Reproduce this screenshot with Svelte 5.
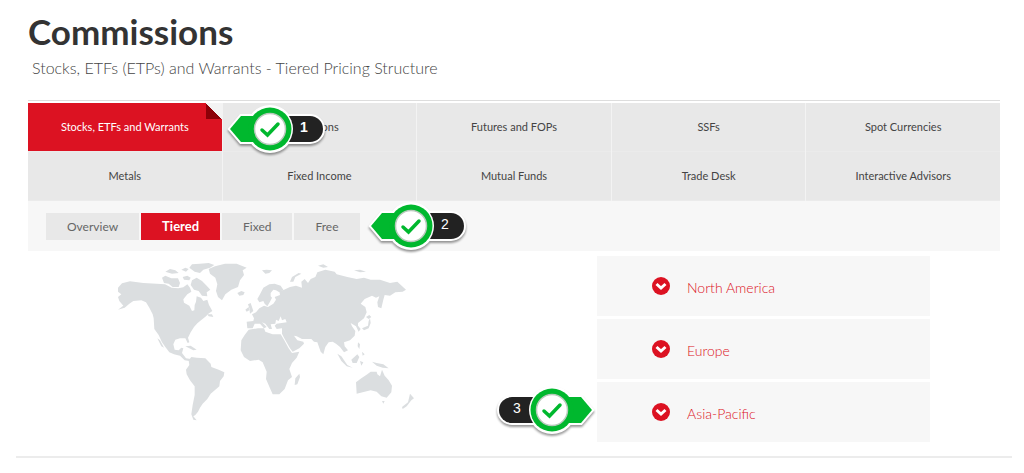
<script lang="ts">
	const products = [
		'Stocks, ETFs and Warrants',
		'Options',
		'Futures and FOPs',
		'SSFs',
		'Spot Currencies',
		'Metals',
		'Fixed Income',
		'Mutual Funds',
		'Trade Desk',
		'Interactive Advisors'
	];
	const plans = ['Overview', 'Tiered', 'Fixed', 'Free'];
	const regions = ['North America', 'Europe', 'Asia-Pacific'];

	let product = $state('Stocks, ETFs and Warrants');
	let plan = $state('Tiered');
</script>

{#snippet marker(step: number, side: 'left' | 'right')}
	<svg class="marker" viewBox="0 0 100 52" role="img" aria-label="Step {step}">
		<g transform={side === 'right' ? 'translate(100 0) scale(-1 1)' : undefined}>
			<g class="outline">
				<path d="M3 26L14 13H43V39H14Z" />
				<rect x="30" y="13" width="66" height="26" rx="13" />
				<circle cx="43" cy="26" r="22" />
			</g>
			<rect x="30" y="13" width="66" height="26" rx="13" fill="#222" />
			<circle cx="43" cy="26" r="23" fill="#fff" />
			<path d="M3 26L14 13H43V39H14Z" fill="#00b82e" />
			<circle cx="43" cy="26" r="21.5" fill="#00b82e" />
			<circle cx="43" cy="26" r="15.5" fill="#fff" stroke="#b9c9bc" stroke-width="1.5" />
		</g>
		<path class="tick" d={side === 'right' ? 'M49 27L54.5 32L65 21' : 'M35 27L40.5 32L51 21'} />
		<text class:bold={step === 1} x={side === 'right' ? 22 : 77} y="29">{step}</text>
	</svg>
{/snippet}

<main>
	<header>
		<h1>Commissions</h1>
		<p>Stocks, ETFs (ETPs) and Warrants - Tiered Pricing Structure</p>
	</header>

	<nav class="products">
		{#each products as name, i}
			<div class="cell">
				<button class:active={product === name} onclick={() => (product = name)}>{name}</button>
				{#if i === 1}
					<div class="over-cell">{@render marker(1, 'left')}</div>
				{/if}
			</div>
		{/each}
	</nav>

	<nav class="plans">
		{#each plans as name}
			<button class:active={plan === name} onclick={() => (plan = name)}>{name}</button>
		{/each}
		{@render marker(2, 'left')}
	</nav>

	<div class="content">
		<div class="map">
			<svg viewBox="45 15 906 489" role="img" aria-label="World map">
				<!-- Americas -->
				<path d="M54 98L66 85L90 79L130 84L170 86L195 88L215 98L235 100L250 97L262 88L270 98L274 110L262 118L250 133L252 143L268 152L276 168L283 166L284 150L288 140L290 124L303 128L310 138L322 134L327 150L337 168L325 176L318 184L303 196L292 205L282 216L272 232L264 248L268 262L263 264L256 250L240 250L226 254L220 268L224 284L236 286L244 278L250 280L246 294L258 310L272 312L268 318L254 316L240 302L222 298L208 292L196 276L186 262L176 240L163 222L161 190L158 178L148 158L138 142L124 136L100 138L88 146L74 158L54 164L70 152L58 138L54 126L64 118L54 110Z" />
				<path d="M172 250L180 256L192 278L184 274ZM256 274L272 272L290 284L280 286ZM322 178L336 178L340 186L326 184Z" />
				<path d="M186 68L196 62L214 70L234 70L240 84L236 96L218 96L206 86L192 84ZM196 50L210 42L226 46L236 54L216 56ZM244 44L256 38L266 42L258 50ZM268 38L276 28L300 26L326 24L343 30L330 38L310 44L300 54L284 50ZM248 66L262 62L272 68L268 76L252 74ZM276 76L290 68L306 78L320 92L331 104L320 112L322 124L306 122L296 108L282 104L272 90Z" />
				<path d="M326 42L345 34L375 26L410 26L440 38L428 46L432 60L420 76L414 96L394 104L376 118L366 136L354 126L348 108L352 88L346 68L330 56ZM412 114L424 108L434 112L430 120L418 122Z" />
				<path d="M266 316L274 306L290 308L316 310L332 326L334 336L356 344L373 352L371 364L360 378L358 394L346 404L332 416L322 432L308 446L300 458L294 470L286 480L280 484L290 496L280 494L274 478L278 450L284 420L284 394L270 376L260 358L258 344L268 330Z" />
				<g transform="translate(420 0)">
					<!-- Europe and Asia -->
					<path d="M52 132L60 118L70 98L88 88L104 86L122 92L130 104L118 112L108 106L100 104L92 114L92 124L96 128L90 140L82 154L74 146L70 138L58 142Z" />
					<path d="M118 108L132 104L150 96L168 92L186 98L184 80L194 72L204 84L212 72L226 66L232 52L256 44L284 50L290 58L322 66L350 72L372 68L392 74L420 74L450 84L472 80L498 104L488 110L466 112L450 122L434 120L430 134L424 160L414 156L412 142L418 124L408 128L396 122L374 132L362 146L376 156L380 172L372 190L354 204L354 212L362 222L356 230L348 214L332 204L336 214L346 228L344 242L330 256L312 262L314 274L324 286L312 292L300 276L288 266L278 260L266 262L256 276L250 298L242 290L232 262L222 260L214 252L186 252L170 244L162 242L172 256L190 260L192 266L178 280L158 290L150 280L132 248L126 236L126 220L110 222L104 212L110 206L140 202L136 192L126 196L122 184L116 198L108 194L106 206L92 208L96 222L88 222L76 206L66 202L80 216L72 220L60 206L44 206L38 220L22 220L20 200L40 198L42 190L36 178L48 172L58 160L72 152L84 156L100 146L108 134L104 126L120 120Z" />
					<path d="M30 176L40 168L32 144L24 148L28 160ZM16 164L26 156L28 166L20 170ZM66 46L80 44L96 46L88 54L76 56ZM150 80L156 66L176 54L184 56L166 66L160 80ZM234 32L250 28L264 36L250 38ZM342 46L360 44L378 50L360 52ZM366 220L384 212L386 198L390 190L392 204L386 220L372 226ZM378 186L388 180L394 186L386 192Z" />
					<path d="M292 296L304 304L322 330L338 338L320 334L304 318ZM334 314L352 298L358 306L350 324L338 324ZM360 318L370 322L364 332ZM354 262L360 268L358 282L353 274ZM366 290L374 298L368 302ZM396 320L410 324L430 328L446 340L428 338L410 332Z" />
					<!-- Africa -->
					<path d="M26 224L54 220L72 220L76 230L98 238L122 238L132 254L146 280L156 294L178 290L170 308L156 324L148 342L156 366L144 376L134 402L118 418L98 418L90 400L78 372L80 350L68 322L56 314L30 318L12 306L2 286L4 256L14 240ZM164 390L166 370L178 356L180 366L172 388Z" />
					<!-- Oceania -->
					<path d="M348 382L364 370L382 358L392 350L410 350L412 358L420 364L426 344L434 362L446 376L456 392L454 412L440 428L424 424L410 410L392 406L368 412L350 416ZM426 438L434 438L430 446ZM510 416L522 430L514 436L500 454L488 462L486 456L504 442Z" />
				</g>
			</svg>
		</div>

		<div class="regions">
			{#each regions as region, i}
				<div class="region">
					<button>
						<svg viewBox="0 0 18 18" aria-hidden="true">
							<circle cx="9" cy="9" r="9" fill="#dc1222" />
							<path d="M4.5 7L9 11L13.5 7" />
						</svg>
						<span>{region}</span>
					</button>
					{#if i === 2}
						<div class="beside-region">{@render marker(3, 'right')}</div>
					{/if}
				</div>
			{/each}
		</div>
	</div>
</main>

<style>
	:global(body) {
		margin: 0;
		background: #fff;
		font-family: Lato, 'Open Sans', sans-serif;
	}

	main {
		margin: 0 12px 0 16px;
		padding: 0 12px 14px;
		border-bottom: 2px solid #ececec;
	}

	header {
		padding-top: 11px;
		border-bottom: 1px solid #ddd;
		margin-bottom: 2px;
	}

	h1 {
		margin: 0;
		font-size: 35px;
		line-height: 40px;
		font-weight: 700;
		color: #333;
	}

	header p {
		margin: 0;
		padding: 7px 4px 22px;
		font-size: 16px;
		line-height: 20px;
		font-weight: 300;
		color: #444;
	}

	button {
		border: none;
		padding: 0;
		font-family: inherit;
		cursor: pointer;
	}

	.products {
		display: grid;
		grid-template-columns: repeat(5, 1fr);
		column-gap: 1px;
		background: #f3f3f3;
	}

	.cell {
		position: relative;
	}

	.cell button {
		display: block;
		width: 100%;
		height: 49px;
		padding-bottom: 2px;
		border-bottom: 1px solid #ebebeb;
		background: #e8e8e8;
		color: #444;
		font-size: 11px;
	}

	.cell button.active {
		background: linear-gradient(45deg, #8c0008 50%, #f3f3f3 50%) top right / 16px 16px no-repeat #dc1222;
		color: #fff;
	}

	.over-cell {
		position: absolute;
		top: 0;
		left: 4px;
		z-index: 1;
	}

	.plans {
		display: flex;
		align-items: center;
		gap: 2px;
		height: 50px;
		padding: 0 18px;
		background: #f7f7f7;
	}

	.plans button {
		height: 27px;
		padding: 0 21px;
		background: #e8e8e8;
		color: #666;
		font-size: 12px;
	}

	.plans button.active {
		background: #dc1222;
		color: #fff;
		font-size: 13px;
		font-weight: 700;
	}

	.plans .marker {
		margin-left: 6px;
	}

	.marker {
		display: block;
		width: 100px;
		height: 52px;
		overflow: visible;
	}

	.outline {
		fill: #fff;
		stroke: #fff;
		stroke-width: 4;
		filter: drop-shadow(0 2px 1px #0006);
	}

	.tick {
		fill: none;
		stroke: #00b82e;
		stroke-width: 3.5;
		stroke-linecap: round;
	}

	.marker text {
		fill: #fff;
		font-family: 'Liberation Sans', Arial, sans-serif;
		font-size: 14px;
		text-anchor: middle;
	}

	.marker text.bold {
		font-weight: 700;
	}

	.content {
		display: grid;
		grid-template-columns: 569fr 333fr 70fr;
		padding-top: 5px;
	}

	.map {
		padding: 4px 0 0 87px;
	}

	.map svg {
		display: block;
		width: 302px;
		height: 163px;
		fill: #dbdee0;
	}

	.regions {
		display: flex;
		flex-direction: column;
		gap: 3px;
	}

	.region {
		position: relative;
	}

	.region button {
		display: flex;
		align-items: center;
		gap: 17px;
		width: 100%;
		height: 60px;
		padding-left: 55px;
		background: #f7f7f7;
		color: #dc1222;
		font-size: 14px;
		font-weight: 300;
	}

	.region button svg {
		width: 18px;
		height: 18px;
		fill: none;
		stroke: #fff;
		stroke-width: 3;
	}

	.region button circle {
		stroke: none;
	}

	.region span {
		padding-top: 2px;
	}

	.beside-region {
		position: absolute;
		top: 2px;
		right: 100%;
		padding-right: 2px;
	}
</style>
